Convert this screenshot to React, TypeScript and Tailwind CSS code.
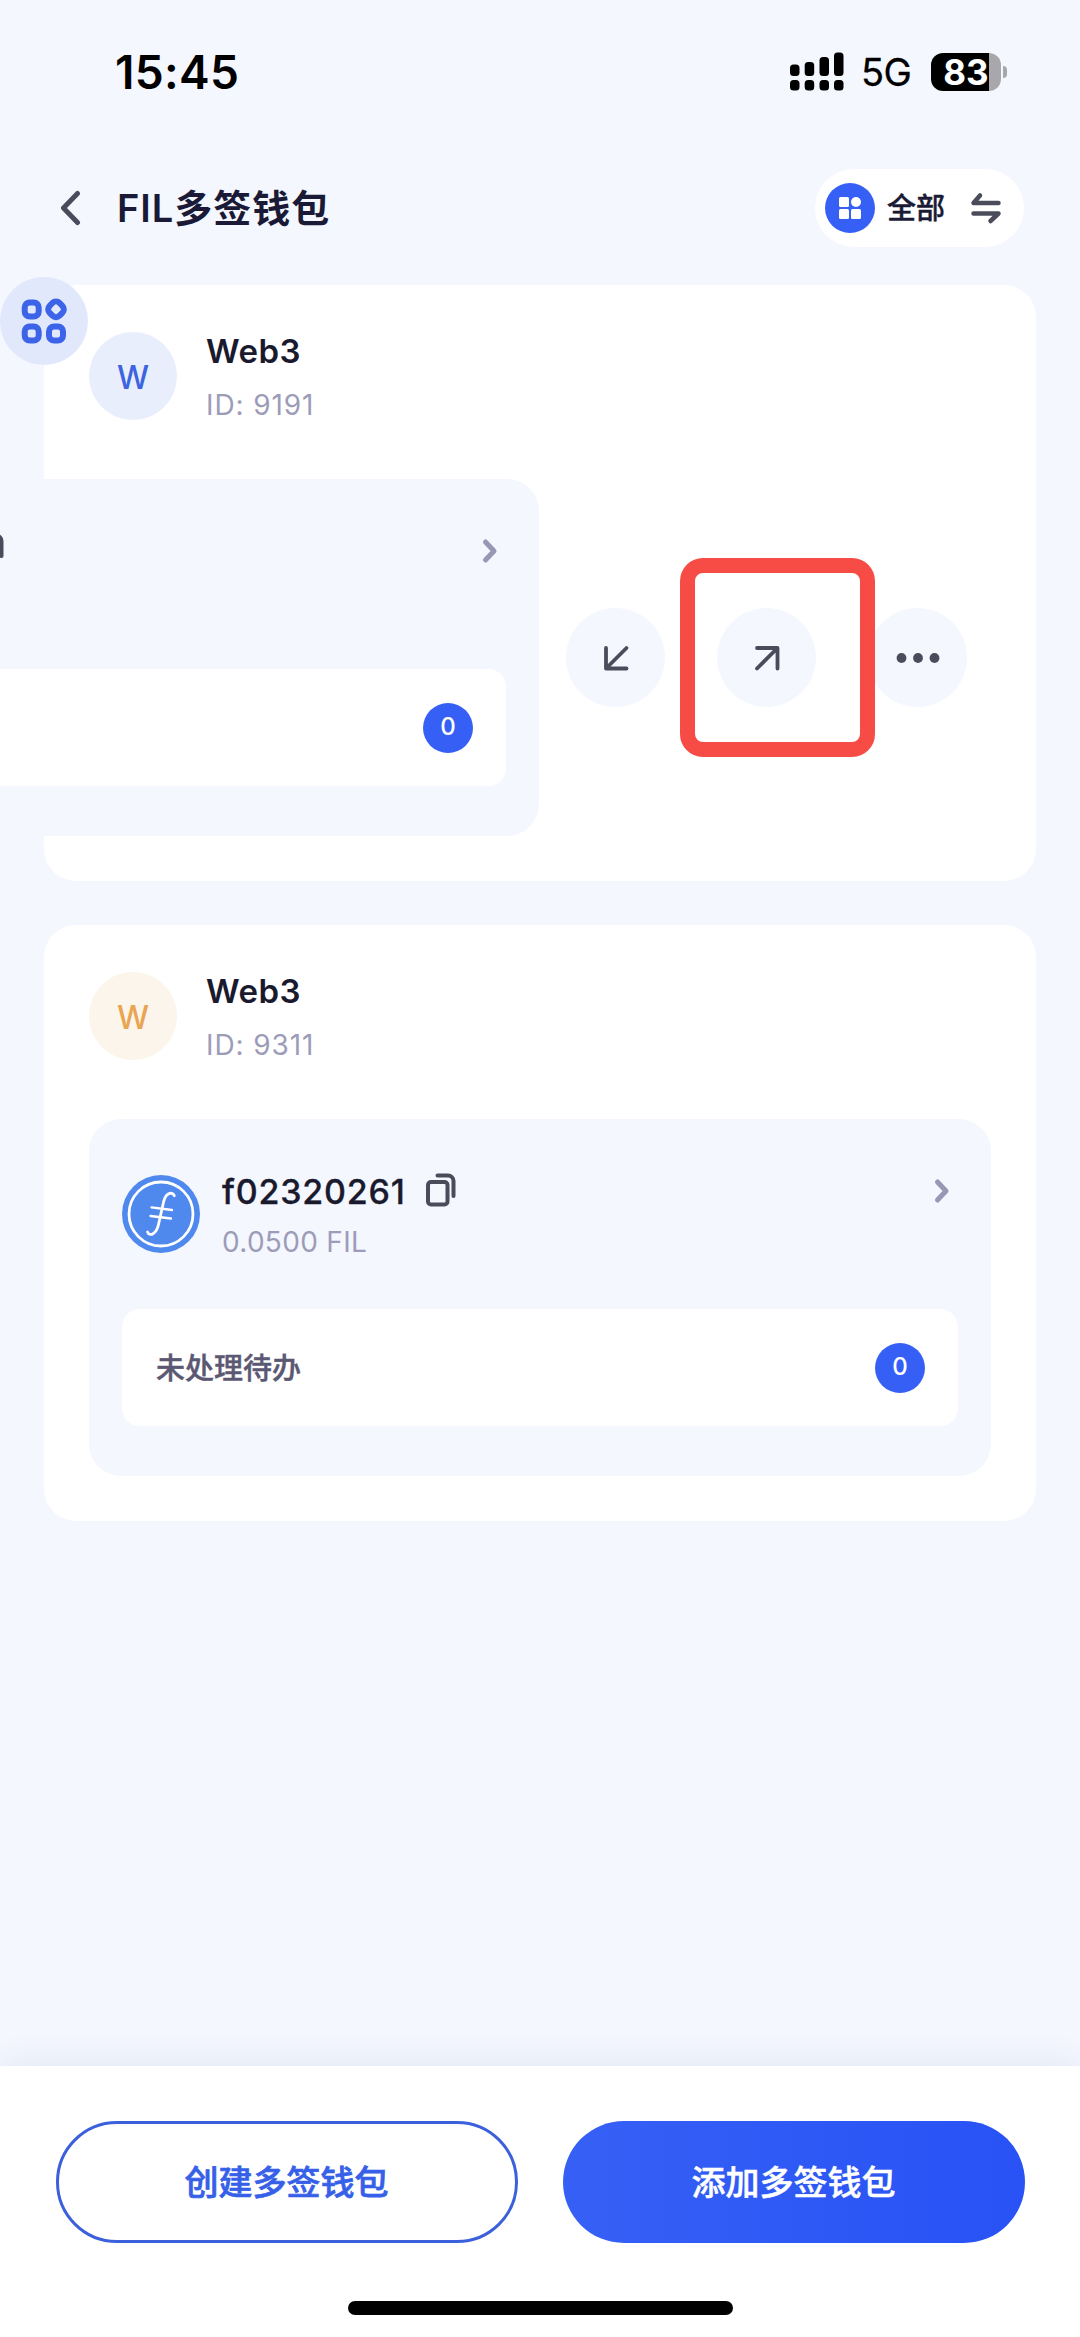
import type { ReactNode } from "react";

function StatusBar() {
  return (
    <div className="flex h-[144px] shrink-0 pl-[115px] pr-[73px]">
      <div className="mt-[44px] h-14 text-[46px] font-semibold leading-[56px] tracking-[0.3px] text-black">15:45</div>
      <div className="ml-auto mt-[52px] flex h-10 items-center">
        <svg width="54" height="40" viewBox="0 0 54 40" className="text-black">
          <g fill="currentColor">
            <rect x="0" y="12.5" width="9.5" height="11.5" rx="3.5" />
            <rect x="14.7" y="10" width="9.5" height="14" rx="3.5" />
            <rect x="29.5" y="5" width="9.5" height="19" rx="3.5" />
            <rect x="44" y="0.5" width="9.5" height="23.5" rx="3.5" />
            <rect x="0" y="28" width="9.5" height="10.5" rx="3.5" />
            <rect x="14.7" y="28" width="9.5" height="10.5" rx="3.5" />
            <rect x="29.5" y="28" width="9.5" height="10.5" rx="3.5" />
            <rect x="44" y="28" width="9.5" height="10.5" rx="3.5" />
          </g>
        </svg>
        <span className="ml-[17px] w-[53px] text-[38px] leading-10 tracking-[-0.5px] text-black [-webkit-text-stroke:0.3px_black]">5G</span>
        <div className="ml-[17px] flex h-[38px] w-[70px] items-center justify-center rounded-[12px] bg-[linear-gradient(90deg,#000_58px,#a8a8ac_58px)] text-[35px] font-bold leading-[38px] text-white">
          83
        </div>
        <div className="ml-[2px] h-3 w-1 rounded-r-full bg-[#a8a8ac]" />
      </div>
    </div>
  );
}

function Header() {
  return (
    <div className="flex h-[141px] shrink-0 items-start pl-[58px] pr-14">
      <svg width="24" height="36" viewBox="0 0 24 36" className="mt-[46px]" fill="none" stroke="#4a4c5c" strokeWidth="5" strokeLinecap="round" strokeLinejoin="round">
        <path d="M19.500 3.500 5.500 18l14 14.500" />
      </svg>
      <h1 className="ml-[35px] mt-[36px] text-[38px] font-semibold leading-[56px] tracking-[1px] text-[#1a1a36]">FIL多签钱包</h1>
      <div className="ml-auto mt-[25px] flex h-[78px] w-[209px] items-center rounded-full bg-white pl-[10px]">
        <svg width="50" height="50" viewBox="0 0 50 50">
          <circle cx="25" cy="25" r="25" fill="#3660f5" />
          <g fill="#fff">
            <rect x="14" y="14" width="10" height="10" rx="1.5" />
            <circle cx="31" cy="19" r="5" />
            <rect x="14" y="26" width="10" height="10" rx="1.5" />
            <rect x="26" y="26" width="10" height="10" rx="1.5" />
          </g>
        </svg>
        <span className="ml-3 mt-px text-[29px] font-medium leading-10 text-[#1a1a36] [-webkit-text-stroke:0.4px_#1a1a36]">全部</span>
        <svg width="32" height="34" viewBox="0 0 32 34" className="ml-[25px]" fill="none" stroke="#4a4c5c" strokeWidth="4.500" strokeLinecap="round" strokeLinejoin="round">
          <path d="M28.500 12H3.500L10 4.500M3.500 22.500h25l-8 7.500" />
        </svg>
      </div>
    </div>
  );
}

function FilecoinLogo() {
  return (
    <svg width="78" height="78" viewBox="0 0 78 78" fill="none" stroke="#fff" strokeLinecap="round">
      <circle cx="39" cy="39" r="39" fill="#5089ee" stroke="none" />
      <circle cx="39" cy="39" r="32" strokeWidth="2.800" />
      <path d="M52.300 20.800C51.500 17 44.500 16.500 41.800 26L36.500 49.500C34.500 59 27.500 62 25.500 57" strokeWidth="2.800" />
      <path d="M29.500 32.300 50 35M28.500 41l20.500 2.500" strokeWidth="2.300" />
    </svg>
  );
}

function CopyIcon() {
  return (
    <svg width="30" height="34" viewBox="0 0 30 34" fill="none" stroke="#4a4c5c" strokeWidth="4" strokeLinecap="round">
      <rect x="2" y="9" width="19.500" height="22.500" rx="3" />
      <path d="M11.500 2.500H22a5.500 5.500 0 0 1 5.500 5.500v15" />
    </svg>
  );
}

type Account = { address: string; balance: string; todo: string };

function AccountPanel({ account, pending }: { account?: Account; pending: number }) {
  return (
    <div className="flex h-[357px] w-[902px] shrink-0 flex-col rounded-[32px] bg-[#f4f7fe] px-[33px] pt-[54px]">
      <div className="flex h-[136px]">
        <div className="mt-[2px] w-[78px]">{account && <FilecoinLogo />}</div>
        <div className="ml-[22px] w-[204px]">
          {account && (
            <>
              <div className="whitespace-nowrap text-[34px] font-medium leading-[38px] tracking-[0.8px] text-[#1a1a2e] [-webkit-text-stroke:0.3px_#1a1a2e]">{account.address}</div>
              <div className="mt-[11px] text-[28px] leading-[40px] tracking-[0.3px] text-[#9d9cb8]">{account.balance}</div>
            </>
          )}
        </div>
        <div>
          <CopyIcon />
        </div>
        <svg width="18" height="26" viewBox="0 0 18 26" className="ml-auto mr-[7px] mt-[5px]" fill="none" stroke="#9897b5" strokeWidth="5" strokeLinecap="round" strokeLinejoin="round">
          <path d="M4.500 4l8.500 9-8.500 9" />
        </svg>
      </div>
      <div className="flex h-[117px] items-center justify-between rounded-[18px] bg-white pl-[34px] pr-[33px]">
        <span className="mt-[2px] text-[29px] font-medium leading-10 text-[#5a5872] [-webkit-text-stroke:0.4px_#5a5872]">{account?.todo}</span>
        <span className="flex size-[50px] items-center justify-center rounded-full bg-[#3660f5] pb-px text-[24px] font-medium leading-none text-white">{pending}</span>
      </div>
    </div>
  );
}

function WalletCard({ id, avatarClass, children }: { id: string; avatarClass: string; children: ReactNode }) {
  return (
    <section className="mx-[44px] flex h-[596px] shrink-0 flex-col rounded-[32px] bg-white px-[45px] pt-[47px]">
      <div className="flex h-[147px]">
        <div className={`flex size-[88px] items-center justify-center rounded-full pt-[3px] text-[32px] font-medium ${avatarClass}`}>W</div>
        <div className="ml-[29px]">
          <div className="text-[33px] font-semibold leading-[38px] tracking-[0.5px] text-[#1a1a2e]">Web3</div>
          <div className="mt-[15px] text-[28px] leading-[40px] tracking-[0.9px] text-[#9d9cb8]">ID: {id}</div>
        </div>
      </div>
      {children}
    </section>
  );
}

function ActionButton({ children }: { children: ReactNode }) {
  return <button className="flex size-[99px] shrink-0 items-center justify-center rounded-full bg-[#f4f7fe]">{children}</button>;
}

function SwipeActions() {
  return (
    <div className="ml-[27px] flex gap-[52px]">
      <ActionButton>
        <svg width="28" height="28" viewBox="0 0 28 28" fill="none" stroke="#4a4c5c" strokeWidth="3.800" strokeLinecap="round" strokeLinejoin="round">
          <path d="M4 4v20.500h20.500M5 23.500 24.500 4" />
        </svg>
      </ActionButton>
      <div className="relative">
        <ActionButton>
          <svg width="28" height="28" viewBox="0 0 28 28" fill="none" stroke="#4a4c5c" strokeWidth="3.800" strokeLinecap="round" strokeLinejoin="round">
            <path d="M4 4h20.500v20.500M23.500 5 4 24.500" />
          </svg>
        </ActionButton>
        <div className="absolute -left-[37px] -top-[50px] z-10 h-[199px] w-[195px] rounded-[23px] border-[15px] border-[#f74b46]" />
      </div>
      <ActionButton>
        <svg width="44" height="10" viewBox="0 0 44 10" fill="#4a4c5c">
          <circle cx="5.500" cy="5" r="4.900" />
          <circle cx="22" cy="5" r="4.900" />
          <circle cx="38.500" cy="5" r="4.900" />
        </svg>
      </ActionButton>
    </div>
  );
}

function FloatingMenu() {
  return (
    <button className="absolute left-0 top-[277px] flex size-[88px] items-center justify-center rounded-full bg-[#e1e8fb]">
      <svg width="46" height="46" viewBox="0 0 46 46" fill="none" stroke="#3c63e8" strokeWidth="6">
        <rect x="3.700" y="4.500" width="14" height="14" rx="5" />
        <rect x="28" y="4.300" width="14" height="14" rx="5" transform="rotate(45 35 11.300)" />
        <rect x="3.700" y="28.500" width="14" height="14" rx="5" />
        <rect x="28" y="28.500" width="14" height="14" rx="5" />
      </svg>
    </button>
  );
}

function BottomBar() {
  return (
    <div className="mt-auto flex h-[271px] shrink-0 flex-col bg-white px-[55.5px] pt-[55px] shadow-[0_-6px_30px_rgba(40,60,130,0.07)]">
      <div className="grid h-[122px] grid-cols-2 gap-[45px]">
        <button className="rounded-full border-[3px] border-[#3c60dc] pt-px text-[34px] font-medium leading-[50px] text-[#3660e8] [-webkit-text-stroke:0.7px_#3660e8]">创建多签钱包</button>
        <button className="rounded-full bg-linear-to-r from-[#3660f5] to-[#2852f5] pt-px text-[34px] font-medium leading-[50px] text-white [-webkit-text-stroke:0.5px_white]">添加多签钱包</button>
      </div>
      <div className="mx-auto mt-[58px] h-[14px] w-[385px] rounded-full bg-black" />
    </div>
  );
}

export default function App() {
  return (
    <main className="relative flex h-[2337px] w-[1080px] flex-col overflow-hidden bg-[#f4f7fe] font-[Inter,'Noto_Sans_CJK_SC',sans-serif]">
      <StatusBar />
      <Header />
      <WalletCard id="9191" avatarClass="bg-[#e9eefc] text-[#3c63e0]">
        <div className="-ml-[452px] flex items-center">
          <AccountPanel pending={0} />
          <SwipeActions />
        </div>
      </WalletCard>
      <div className="h-[44px] shrink-0" />
      <WalletCard id="9311" avatarClass="bg-[#fcf5ec] text-[#e9a552]">
        <AccountPanel account={{ address: "f02320261", balance: "0.0500 FIL", todo: "未处理待办" }} pending={0} />
      </WalletCard>
      <BottomBar />
      <FloatingMenu />
    </main>
  );
}
